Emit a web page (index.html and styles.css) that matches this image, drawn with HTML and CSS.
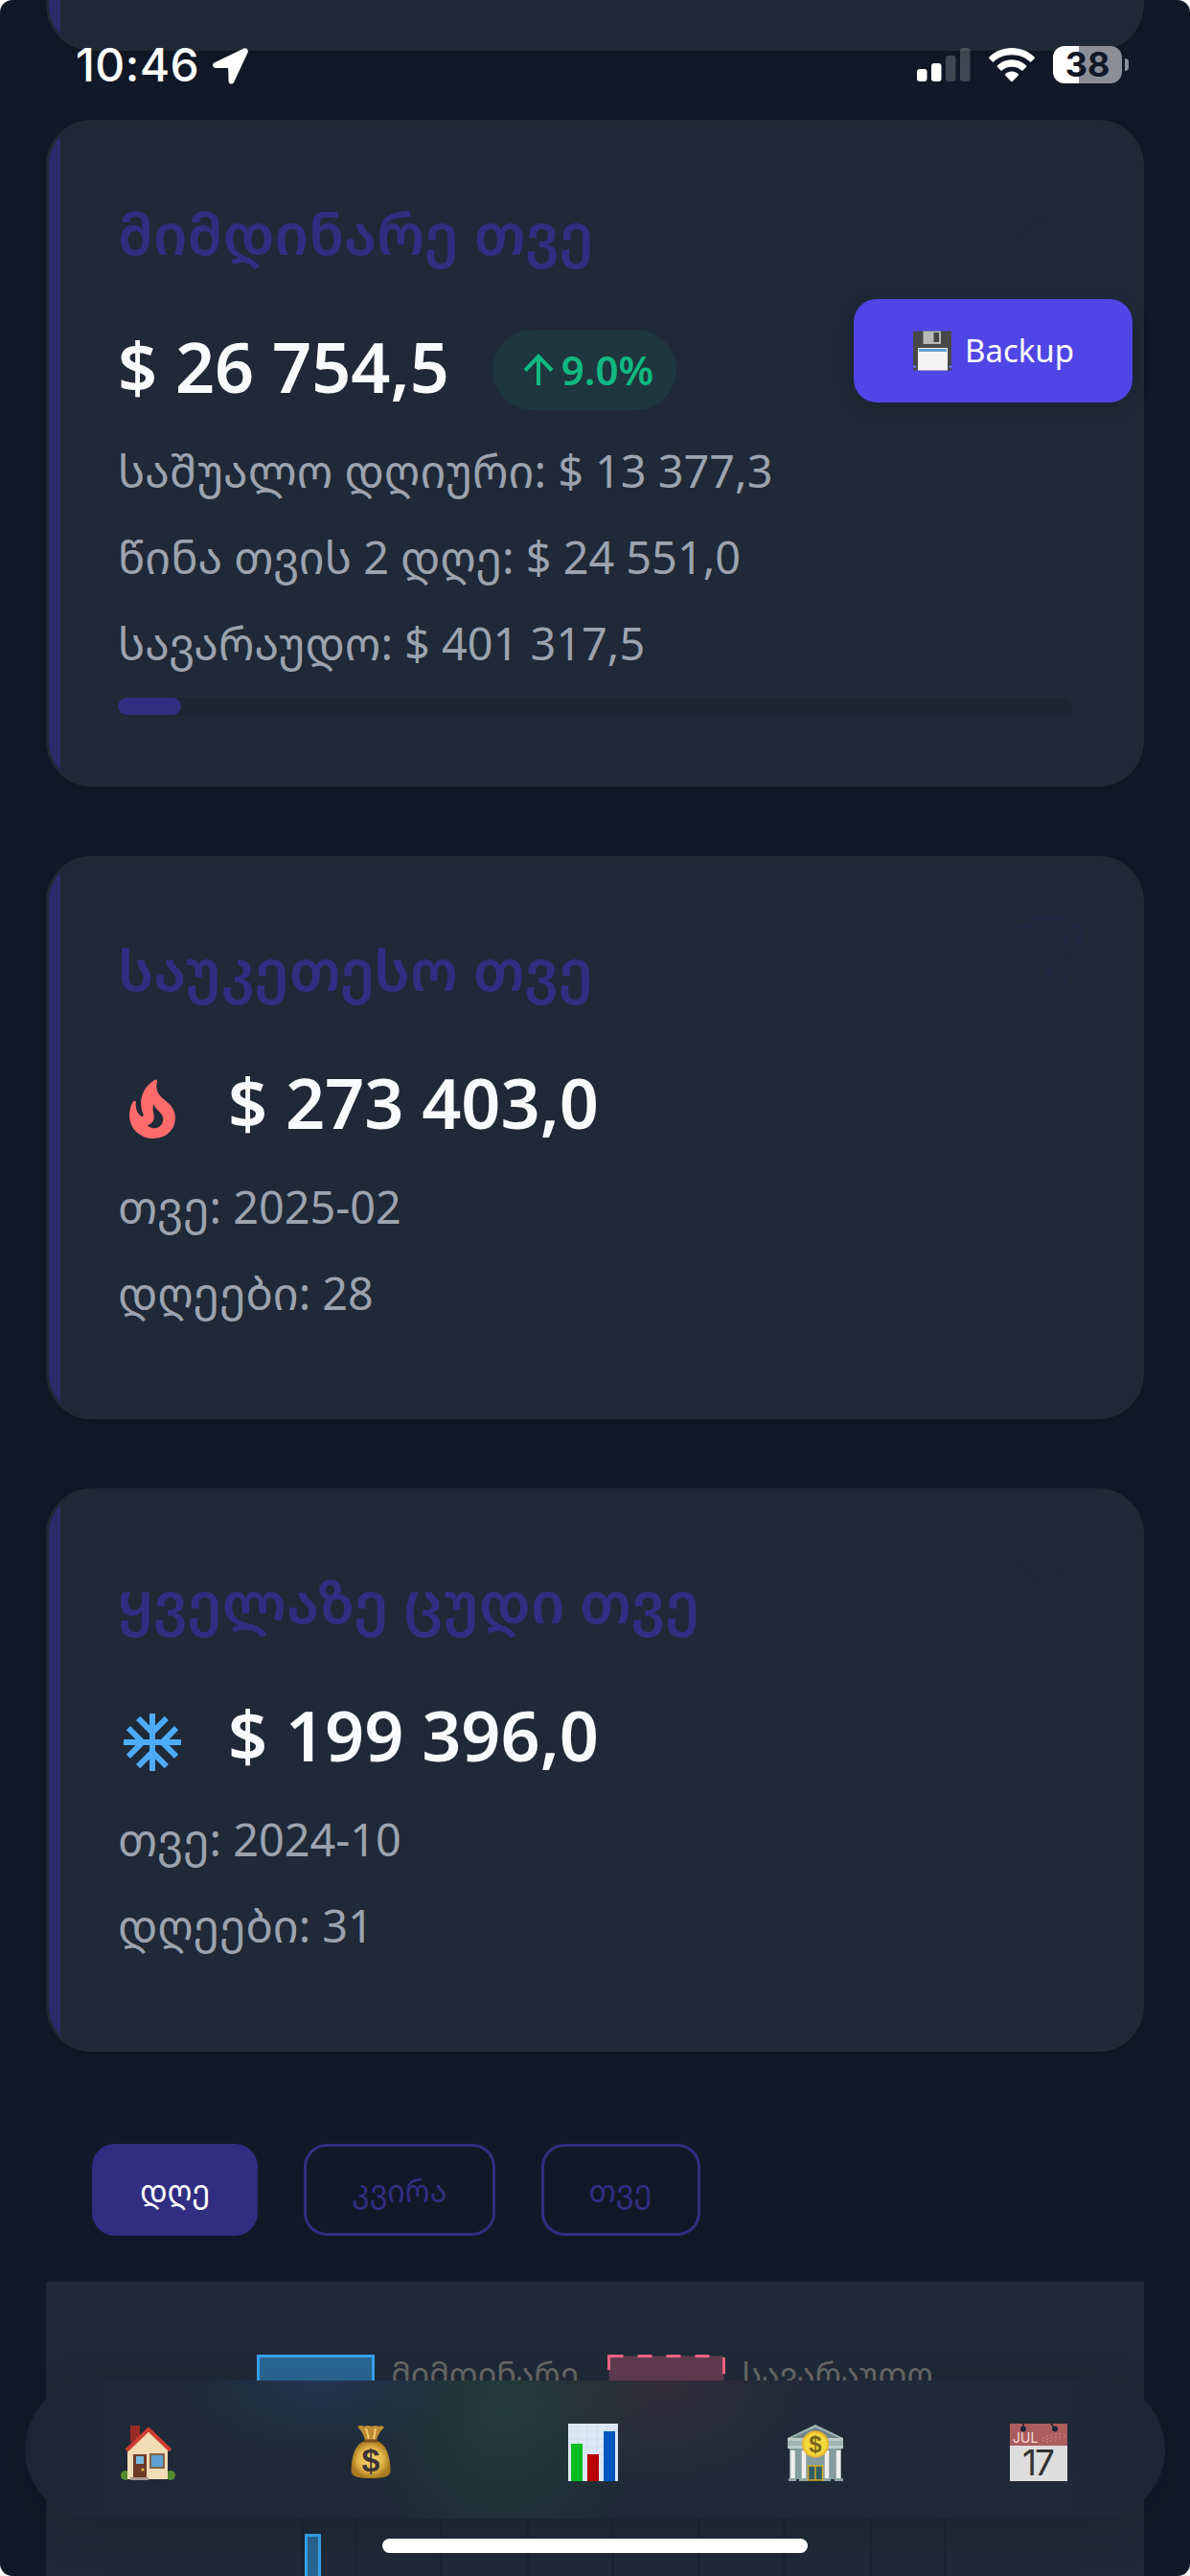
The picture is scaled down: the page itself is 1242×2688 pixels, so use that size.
FILE: index.html
```html
<!DOCTYPE html>
<html lang="ka">
<head>
<meta charset="utf-8">
<title>Backup</title>
<link rel="stylesheet" href="styles.css">
</head>
<body>
<div class="screen">
  <main class="content">
    <section class="card card-previous"></section>

    <section class="card">
      <svg class="watermark" viewBox="0 0 24 24"><path d="M16 6l2.29 2.29-4.88 4.88-4-4L2 16.59 3.41 18l6-6 4 4 6.3-6.29L22 12V6z"/></svg>
      <h2 class="card-title">მიმდინარე თვე</h2>
      <div class="value"><span>$ 26 754,5</span>
        <span class="trend"><svg class="trend-icon" viewBox="0 0 32 34"><path d="M16 33V3M2 17.500L16 3l14 14.500"/></svg>9.0%</span>
      </div>
      <p class="detail">საშუალო დღიური: $ 13 377,3</p>
      <p class="detail">წინა თვის 2 დღე: $ 24 551,0</p>
      <p class="detail">სავარაუდო: $ 401 317,5</p>
      <div class="progress"><div class="progress-fill" style="width: 6.6%"></div></div>
    </section>

    <section class="card">
      <svg class="watermark" viewBox="0 0 24 24"><path d="M19 5h-2V3H7v2H5c-1.100 0-2 .9-2 2v1c0 2.550 1.920 4.630 4.390 4.940.63 1.500 1.980 2.630 3.610 2.960V19H7v2h10v-2h-4v-3.100c1.630-.33 2.980-1.460 3.610-2.960C19.080 12.630 21 10.550 21 8V7c0-1.100-.9-2-2-2zM5 8V7h2v3.820C5.840 10.400 5 9.300 5 8zm14 0c0 1.300-.84 2.400-2 2.820V7h2v1z"/></svg>
      <h2 class="card-title">საუკეთესო თვე</h2>
      <div class="value with-icon">
        <svg class="value-icon fire" viewBox="0 0 24 24"><path fill-rule="evenodd" d="M19.480 12.350c-1.570-4.080-7.160-4.300-5.810-10.230.1-.44-.37-.78-.75-.55C9.290 3.710 6.680 8 8.870 13.620c.18.46-.36.89-.75.59-1.810-1.370-2-3.340-1.840-4.750.06-.52-.62-.77-.91-.34C4.690 10.160 4 11.840 4 14.370c.38 5.600 5.110 7.320 6.810 7.540 2.430.31 5.060-.14 6.950-1.870 2.080-1.930 2.840-5.010 1.720-7.690zM10.200 17.380c1.440-.35 2.180-1.390 2.380-2.310.33-1.430-.96-2.830-.09-5.090.33 1.870 3.270 3.040 3.270 5.080.08 2.530-2.660 4.700-5.560 2.320z"/></svg>
        <span>$ 273 403,0</span>
      </div>
      <p class="detail">თვე: 2025-02</p>
      <p class="detail">დღეები: 28</p>
    </section>

    <section class="card">
      <svg class="watermark" viewBox="0 0 24 24"><path d="M16 18l2.290-2.290-4.880-4.880-4 4L2 7.410 3.410 6l6 6 4-4 6.300 6.290L22 12v6z"/></svg>
      <h2 class="card-title">ყველაზე ცუდი თვე</h2>
      <div class="value with-icon">
        <svg class="value-icon snow" viewBox="0 0 24 24"><path d="M22 11h-4.170l3.240-3.240-1.410-1.420L15 11h-2V9l4.660-4.660-1.420-1.410L13 6.170V2h-2v4.170L7.760 2.930 6.340 4.340 11 9v2H9L4.340 6.340 2.930 7.760 6.170 11H2v2h4.170l-3.240 3.240 1.410 1.420L9 13h2v2l-4.660 4.660 1.420 1.410L11 17.830V22h2v-4.170l3.240 3.240 1.420-1.410L13 15v-2h2l4.660 4.660 1.410-1.420L17.830 13H22z"/></svg>
        <span>$ 199 396,0</span>
      </div>
      <p class="detail">თვე: 2024-10</p>
      <p class="detail">დღეები: 31</p>
    </section>

    <div class="filters">
      <button class="filter active">დღე</button>
      <button class="filter">კვირა</button>
      <button class="filter">თვე</button>
    </div>

    <section class="chart">
      <div class="legend">
        <span class="legend-item"><span class="swatch current"></span>მიმდინარე</span>
        <span class="legend-item"><svg class="swatch-dashed" viewBox="0 0 123 40"><rect x="1.500" y="1.500" width="120" height="38.500"/><path d="M1.500 16V1.500H16.500M31.500 1.500h15M61.500 1.500h15M91.500 1.500h15M121.500 3V20"/></svg>სავარაუდო</span>
      </div>
      <svg class="plot" viewBox="0 0 1146 200">
        <path class="grid" d="M267.500 0V200M323.500 0V200M412.500 0V200M502.500 0V200M591.500 0V200M681.500 0V200M770.500 0V200M860.500 0V200M938.500 0V200"/>
        <path class="bar" d="M271.500 201V88.500H285.500V201"/>
      </svg>
    </section>
  </main>

  <header class="status">
    <span class="clock">10:46</span>
    <svg class="location" viewBox="0 0 37 38"><path d="M32.500.6L2 15.200C-1 16.700-.4 20.800 3 20.900L15.200 21.100Q16.300 21.100 16.300 22.200L16.500 34.500C16.600 38 20.800 38.800 22.300 35.500L36.500 5C37.800 2 35.200-.6 32.500.6Z"/></svg>
    <svg class="signal" viewBox="0 0 56 36"><rect x="0" y="22" width="10.500" height="13" rx="3"/><rect x="15" y="16" width="10.500" height="19" rx="3"/><g opacity=".2"><rect x="30" y="8" width="10.500" height="27" rx="3"/><rect x="45" y="0" width="10.500" height="35" rx="3"/></g></svg>
    <svg class="wifi" viewBox="0 0 48 36"><path d="M24 0C33 0 41.500 3.500 47.500 9.500Q48.300 10.400 47.500 11.300L43.600 15C38.500 10 31.500 7.300 24 7.300S9.500 10 4.400 15L.5 11.300Q-.3 10.400.5 9.500C6.500 3.500 15 0 24 0ZM24 12.300C29.700 12.300 35 14.500 39 18.200Q39.800 19.200 39 20L35 24C32 21.200 28.200 19.700 24 19.700S16 21.200 13 24L9 20Q8.200 19.200 9 18.200C13 14.500 18.300 12.300 24 12.300ZM24 24.500C26.600 24.500 28.900 25.400 30.700 26.900Q31.500 27.800 30.700 28.700L25 34.700Q24 35.600 23 34.700L17.300 28.700Q16.500 27.800 17.300 26.900C19.100 25.400 21.400 24.500 24 24.500Z"/></svg>
    <span class="battery">38</span>
  </header>

  <button class="backup">
    <svg class="floppy" viewBox="0 0 42 42"><path d="M1 .5h40v41H1z" fill="#484848"/><path d="M11.500 .5h18.500v13.500h-18.500z" fill="#b8b8b8"/><path d="M22.500 2h5.500v10h-5.500z" fill="#444"/><path d="M6 18h31v23.500H6z" fill="#f3f3f3"/><path d="M7 19h29v3H7z" fill="#5d9ed3"/><path d="M1 37.500h3M38.500 37.500h2.500" stroke="#777cff" stroke-width="2"/></svg>
    Backup
  </button>

  <nav class="tabs">
    <a class="tab"><svg viewBox="0 0 60 60"><path d="M12 2h10v12l-10 6z" fill="#9a2a26"/><circle cx="7" cy="54" r="5" fill="#568b2e"/><circle cx="54" cy="54" r="5" fill="#568b2e"/><path d="M9 27L31 6l20 21v31H9z" fill="#f2dcb5"/><path d="M8 28L31 6l23 22" fill="none" stroke="#cf3c32" stroke-width="4"/><path d="M15 32h14v26H15z" fill="#6e3a28"/><path d="M18 34h8v8h-8z" fill="#78b8df"/><circle cx="25" cy="48" r="1.500" fill="#edbc47"/><path d="M33 32h14v14H33z" fill="#5e9fd2" stroke="#816447" stroke-width="2"/><path d="M12 56h19v3H12z" fill="#a59a8c"/></svg></a>
    <a class="tab"><svg viewBox="0 0 60 60"><defs><radialGradient id="bag"><stop offset="0" stop-color="#f9db73"/><stop offset=".6" stop-color="#e4b94b"/><stop offset="1" stop-color="#a9791f"/></radialGradient></defs><path d="M16 3q4-2 7 0 4-2 8 0 4-2 7 0 4-2 6 1-6 5-8 13H24Q22 9 16 3Z" fill="#bd8b35"/><path d="M24 18h12c10 3 14 15 14.500 30 0 7-5 9-20.500 9S9.500 55 9.500 48C10 33 14 21 24 18Z" fill="url(#bag)"/><path d="M23 18h14" stroke="#7c501b" stroke-width="3"/><path d="M25 5l3 11M35 5l-2 11" stroke="#f1c96a" stroke-width="2"/><text x="30" y="50" class="bag-sign">$</text></svg></a>
    <a class="tab"><svg viewBox="0 0 60 60"><path d="M4 0h52v60H4z" fill="#dce9f5"/><path d="M5 8h50M5 16h50M5 24h50M5 32h50M5 40h50M5 48h50M14 0v60M24 0v60M34 0v60M44 0v60" stroke="#cfdcea" stroke-width="1"/><path d="M7 21h12v39H7z" fill="#08bd21"/><path d="M24 32h12v28H24z" fill="#b90000"/><path d="M41 8h12v52H41z" fill="#0057bd"/></svg></a>
    <a class="tab"><svg viewBox="0 0 60 60"><path d="M1 15L30 1l29 14v10H1z" fill="#9fb3b2"/><path d="M5 15L30 4l25 11z" fill="#6d8587"/><path d="M3 25h54v33H3z" fill="#849d9e"/><path d="M1 15h58v3H1zM1 23h58v3H1z" fill="#bccbc9"/><path d="M6.500 28v29M18 28v29M42 28v29M54 28v29" stroke="#efefed" stroke-width="4.500"/><path d="M2 57h8v3H2zM13 57h9v3h-9zM37 57h9v3h-9zM50 57h9v3h-9z" fill="#8fa5a6"/><path d="M22.500 44h15v15h-15zM30 44v15" fill="#315d66" stroke="#d1ac28" stroke-width="1.500"/><circle cx="30" cy="21.500" r="14" fill="#e9b52f"/><circle cx="30" cy="21.500" r="12" fill="#f2d93c"/><text x="30" y="30" class="bank-sign">$</text></svg></a>
    <a class="tab"><svg class="calendar" viewBox="0 0 60 60"><path d="M0 0h60v23H0z" fill="#ad5d5d"/><path d="M0 23h60v37H0z" fill="#dedddd"/><circle cx="14" cy="5.500" r="3" fill="#1c2638"/><circle cx="47" cy="5.500" r="3" fill="#1c2638"/><path d="M14 0v5M43 0l4 5" stroke="#1c2638" stroke-width="1.500"/><path d="M35 14v6M39 12v8M43 11v9M48 10v9M52 10v7M57 10v5" stroke="#c78a8a" stroke-dasharray="2 1"/><text x="3" y="20" class="month">JUL</text><text x="29" y="54" class="date">17</text></svg></a>
  </nav>
  <div class="home-indicator"></div>
</div>
</body>
</html>
```
FILE: styles.css
```css
* { box-sizing: border-box; }
html { background: #fff; }
body { margin: 0; font-family: "Noto Sans", "Noto Sans Georgian", "DejaVu Sans", sans-serif; }

.screen {
  position: relative;
  width: 1242px;
  height: 2688px;
  overflow: hidden;
  border-radius: 13px;
  background: #111827;
}

.content {
  display: flex;
  flex-direction: column;
  gap: 72px;
  height: 2688px;
  padding: 0 48px;
}

.card {
  position: relative;
  flex: none;
  height: 588px;
  padding: 72px;
  overflow: hidden;
  border: 3px solid #1f2a35;
  border-radius: 48px;
  background: #1f2937;
  box-shadow: 0 4px 14px rgba(0, 0, 0, .12);
}
.card::before {
  content: "";
  position: absolute;
  inset: 0 auto 0 0;
  width: 12px;
  background: #2b2b6b;
}
.card:nth-child(2) { height: 696px; }
.card-previous {
  height: 53px;
  padding: 0;
  border-top: 0;
  border-radius: 0 0 48px 48px;
}

.watermark {
  position: absolute;
  top: 48px;
  right: 48px;
  width: 96px;
  height: 96px;
  fill: #20283d;
}

.card-title {
  margin: 0 0 42px;
  color: #312e81;
  font-size: 60px;
  font-weight: 600;
  line-height: 86px;
  white-space: nowrap;
}

.value {
  display: flex;
  align-items: center;
  gap: 45px;
  height: 108px;
  margin-bottom: 19px;
  color: #f9fafb;
  font-size: 72px;
  font-weight: 600;
  line-height: 108px;
  white-space: nowrap;
}
.with-icon { gap: 43px; }
.value-icon { width: 72px; height: 72px; margin-top: 16px; }
.fire { fill: #ff6b6b; }
.snow { fill: #4dabf7; }

.trend {
  display: flex;
  align-items: center;
  gap: 8px;
  height: 84px;
  margin-top: 8px;
  padding: 0 24px 0 32px;
  border-radius: 42px;
  background: #1e363e;
  color: #10b981;
  font-size: 42px;
  line-height: 84px;
}
.trend-icon { width: 32px; height: 34px; fill: none; stroke: #10b981; stroke-width: 4; }

.detail {
  margin: 0 0 18px;
  color: #9ca3af;
  font-size: 46.8px;
  line-height: 72px;
  white-space: nowrap;
}

.progress {
  height: 18px;
  margin-top: 21px;
  overflow: hidden;
  border-radius: 9px;
  background: #1e2532;
}
.progress-fill { height: 18px; border-radius: 9px; background: #312e81; }

.filters {
  display: flex;
  gap: 48px;
  margin-top: 24px;
  padding-left: 48px;
}
.filter {
  height: 96px;
  padding: 0 47px;
  border: 3px solid #312e81;
  border-radius: 24px;
  background: transparent;
  color: #312e81;
  font: 400 32.4px/90px "Noto Sans", "Noto Sans Georgian", "DejaVu Sans", sans-serif;
}
.filter.active { background: #312e81; color: #fff; }

.chart {
  flex: 1;
  margin-top: -24px;
  padding-top: 76px;
  overflow: hidden;
  background: #1f2937;
}
.legend {
  display: flex;
  justify-content: center;
  gap: 30px;
  height: 40px;
  color: #666;
  font-size: 34px;
  line-height: 40px;
  white-space: nowrap;
}
.legend-item { display: flex; gap: 17px; }
.swatch { width: 123px; height: 40px; border: 3px solid #36a2eb; background: #2a6591; }
.swatch-dashed { width: 123px; height: 40px; fill: #5f3b4f; }
.swatch-dashed path { fill: none; stroke: #ff6384; stroke-width: 3; }
.plot { display: block; width: 1146px; height: 200px; margin-top: 60px; }
.grid { stroke: #1b2431; stroke-width: 3; }
.bar { fill: #2a6591; stroke: #36a2eb; stroke-width: 3; }

.status { position: absolute; inset: 0 0 auto; height: 125px; color: #fff; }
.status svg { position: absolute; fill: #fff; }
.clock {
  position: absolute;
  top: 39px;
  left: 79px;
  font: 500 48px/58px Inter, sans-serif;
  letter-spacing: .4px;
}
.status .location { top: 50px; left: 222px; width: 37px; height: 38px; }
.status .signal { top: 50px; left: 957px; width: 56px; height: 36px; }
.status .wifi { top: 50px; left: 1032px; width: 48px; height: 36px; }
.battery {
  position: absolute;
  top: 48px;
  left: 1099px;
  width: 72px;
  height: 39px;
  border-radius: 12px;
  background: linear-gradient(90deg, #fff 27px, #8b8e97 27px);
  color: #111827;
  font: 700 36px/39px Inter, sans-serif;
  text-align: center;
}
.battery::after {
  content: "";
  position: absolute;
  top: 13px;
  right: -7px;
  width: 4px;
  height: 13px;
  border-radius: 0 4px 4px 0;
  background: #8b8e97;
}

.backup {
  position: absolute;
  top: 312px;
  left: 891px;
  display: flex;
  align-items: center;
  justify-content: center;
  gap: 13px;
  width: 291px;
  height: 108px;
  padding: 0;
  border: 0;
  border-radius: 24px;
  background: #4f46e5;
  box-shadow: 0 6px 18px rgba(0, 0, 0, .16);
  color: #fff;
  font: 400 33px/108px "Noto Sans", sans-serif;
}
.floppy { width: 42px; height: 42px; }

.tabs {
  position: absolute;
  top: 2484px;
  left: 26px;
  display: flex;
  width: 1190px;
  height: 144px;
  padding: 0 16px 0 12px;
  border-radius: 72px;
  background:
    radial-gradient(ellipse 150px 80px at 310px 0, rgba(38, 74, 120, .38), transparent),
    radial-gradient(ellipse 150px 170px at 500px 30px, rgba(39, 84, 61, .45), transparent),
    radial-gradient(ellipse 160px 110px at 665px 5px, rgba(80, 52, 66, .4), transparent),
    linear-gradient(90deg, #1b2534, #1f2937 90px, #1f2937 1090px, #1b2534);
  box-shadow: 0 12px 48px rgba(0, 0, 0, .12);
}
.tab { display: flex; flex: 1; align-items: center; justify-content: center; }
.tab svg { width: 60px; height: 60px; margin-top: 6px; }
.tab text { text-anchor: middle; }
.bag-sign { fill: #3c3438; font: 700 34px "Liberation Sans", sans-serif; }
.bank-sign { fill: #7c641e; font: 700 24px "Liberation Sans", sans-serif; }
.tab .month { fill: #f1dede; font: 400 14px Inter, sans-serif; text-anchor: start; }
.date { fill: #333; font: 400 37px Inter, sans-serif; letter-spacing: -2px; }

.home-indicator {
  position: absolute;
  top: 2649px;
  left: 399px;
  width: 444px;
  height: 15px;
  border-radius: 8px;
  background: #fff;
}
```
